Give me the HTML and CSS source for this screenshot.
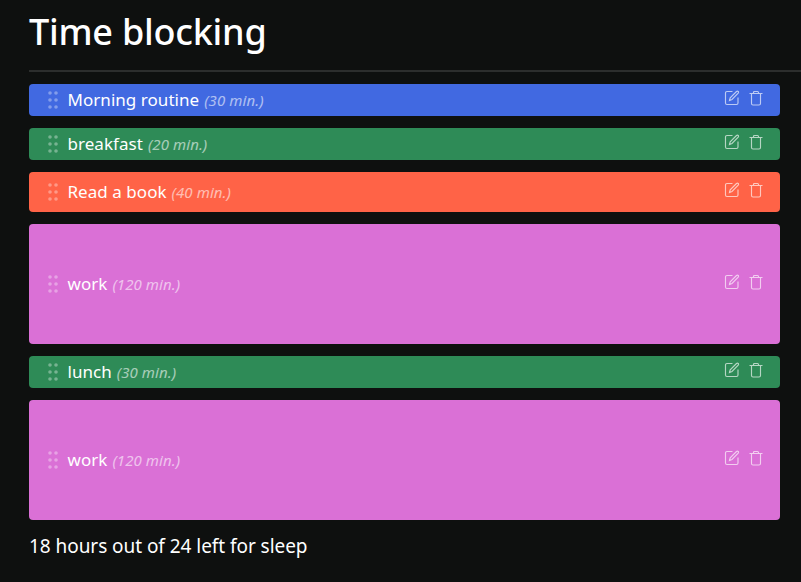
FILE: index.html
```html
<!DOCTYPE html>
<html lang="en">
<head>
<meta charset="utf-8">
<title>Time blocking</title>
<link rel="stylesheet" href="styles.css">
</head>
<body>
<svg class="defs" width="0" height="0">
  <symbol id="grip" viewBox="0 0 10 18"><circle cx="2" cy="2" r="1.8"/><circle cx="8" cy="2" r="1.8"/><circle cx="2" cy="9" r="1.8"/><circle cx="8" cy="9" r="1.8"/><circle cx="2" cy="16" r="1.8"/><circle cx="8" cy="16" r="1.8"/></symbol>
  <symbol id="edit" viewBox="0 0 16 16"><path d="M8.500 1.500h-5.500q-1.500 0-1.500 1.500v10q0 1.500 1.500 1.500h9.500q1.500 0 1.500-1.500v-5.500M5.500 10.500l.7-2.700 6.300-6.300q1-.8 1.700 0t0 1.700l-6.200 6.300z"/></symbol>
  <symbol id="trash" viewBox="0 0 16 16"><path d="M1.500 3.500h13M5.500 3.500v-1q0-1 1-1h3q1 0 1 1v1M3.500 3.500v10q0 1.500 1.500 1.500h6q1.500 0 1.500-1.500v-10"/></symbol>
</svg>
<header><h1>Time blocking</h1></header>
<main>
  <ul class="blocks">
    <li class="block blue"><svg class="grip"><use href="#grip"/></svg><span class="name">Morning routine</span><em>(30 min.)</em><span class="actions"><svg><use href="#edit"/></svg><svg><use href="#trash"/></svg></span></li>
    <li class="block green"><svg class="grip"><use href="#grip"/></svg><span class="name">breakfast</span><em>(20 min.)</em><span class="actions"><svg><use href="#edit"/></svg><svg><use href="#trash"/></svg></span></li>
    <li class="block tomato"><svg class="grip"><use href="#grip"/></svg><span class="name">Read a book</span><em>(40 min.)</em><span class="actions"><svg><use href="#edit"/></svg><svg><use href="#trash"/></svg></span></li>
    <li class="block orchid"><svg class="grip"><use href="#grip"/></svg><span class="name">work</span><em>(120 min.)</em><span class="actions"><svg><use href="#edit"/></svg><svg><use href="#trash"/></svg></span></li>
    <li class="block green"><svg class="grip"><use href="#grip"/></svg><span class="name">lunch</span><em>(30 min.)</em><span class="actions"><svg><use href="#edit"/></svg><svg><use href="#trash"/></svg></span></li>
    <li class="block orchid"><svg class="grip"><use href="#grip"/></svg><span class="name">work</span><em>(120 min.)</em><span class="actions"><svg><use href="#edit"/></svg><svg><use href="#trash"/></svg></span></li>
  </ul>
  <p class="summary">18 hours out of 24 left for sleep</p>
</main>
</body>
</html>
```
FILE: styles.css
```css
* { box-sizing: border-box; }
body { margin: 0; height: 582px; overflow: hidden; background: #0e100f; color: #fff; font-family: "Noto Sans", sans-serif; }
.defs { display: block; }
header { margin-left: 29px; height: 72px; border-bottom: 2px solid #2c2e2d; }
h1 { margin: 0; padding-top: 8px; font-size: 36px; line-height: 48px; font-weight: 500; letter-spacing: -.23px; }
main { padding: 12px 21px 0 29px; }
.blocks { list-style: none; margin: 0; padding: 0; display: grid; gap: 12px; }
.block { height: 32px; border-radius: 4px; display: flex; align-items: center; padding: 0 16px 0 19px; font-size: 17px; line-height: 24px; }
.name { letter-spacing: .04px; }
.blue { background: #4169e1; }
.green { background: #2e8b57; }
.tomato { background: #ff6347; height: 40px; }
.orchid { background: #da70d6; height: 120px; }
.grip { width: 10px; height: 18px; margin-right: 9.500px; fill: #fff; opacity: .35; }
em { margin-left: 5px; font-size: 15px; letter-spacing: .08px; opacity: .58; }
.actions { margin: 0 0 4px auto; display: flex; gap: 8px; opacity: .65; }
.actions svg { width: 16px; height: 16px; fill: none; stroke: #fff; stroke-width: 1.15; }
.summary { margin: 12px 0 0; font-size: 19px; line-height: 28px; letter-spacing: -.05px; }
```
